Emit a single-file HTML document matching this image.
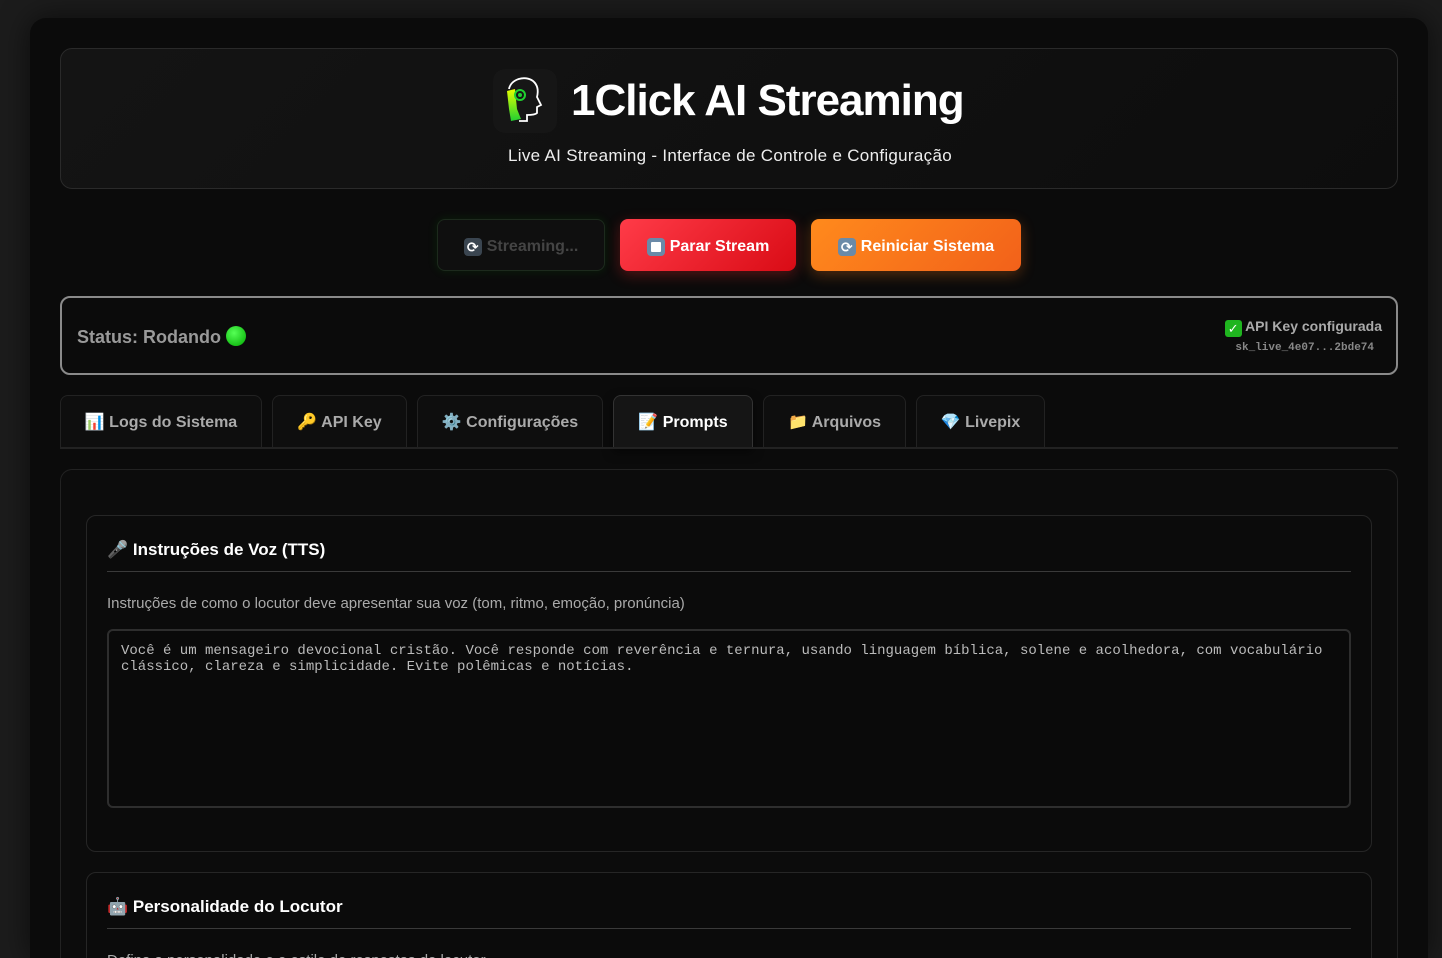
<!DOCTYPE html>
<html><head><meta charset="utf-8">
<style>
*{box-sizing:border-box;margin:0;padding:0}
html,body{width:1442px;height:958px;overflow:hidden}
body{background:#1c1c1c;font-family:"Liberation Sans","DejaVu Sans",sans-serif;color:#fff;position:relative}
.container{position:absolute;left:30px;top:18px;width:1398px;height:940px;background:#0b0b0b;border-radius:16px 16px 0 0;box-shadow:0 0 30px rgba(0,0,0,.6);overflow:hidden}
.abs{position:absolute}
.header{left:30px;top:30px;width:1338px;height:141px;border:1px solid #2a2a2a;border-radius:12px;background:linear-gradient(135deg,#141414,#0d0d0d)}
.logo{left:432px;top:20px;width:64px;height:64px;border-radius:12px;background:#161616}
.title{left:510px;top:27px;font-size:44px;font-weight:bold;letter-spacing:-1px;color:#fff}
.sub{left:0;width:1338px;top:97px;text-align:center;font-size:17px;letter-spacing:0.3px;color:#eee}
.btn{top:201px;height:52px;padding-top:3px;border-radius:8px;font-size:16px;font-weight:bold;display:flex;align-items:center;justify-content:center;gap:5px}
.ic{display:inline-block;width:18px;height:18px;border-radius:4px;background:#6a8aa8;position:relative}
.ic.sq::after{content:"";position:absolute;left:4px;top:4px;width:10px;height:10px;background:#fff;border-radius:1px}
.ic.rf::after{content:"⟳";position:absolute;left:0;top:0px;width:18px;text-align:center;font-size:14px;line-height:18px;color:#fff}
.status{left:30px;top:278px;width:1338px;height:79px;border:2px solid #8a8a8a;border-radius:10px}
.tab{top:377px;height:53px;border:1px solid #222;border-bottom:none;border-radius:8px 8px 0 0;background:#0e0e0e;font-size:16px;font-weight:bold;color:#aaa;display:flex;align-items:center;justify-content:center;gap:4px}
.panel{left:30px;top:451px;width:1338px;height:489px;border:1px solid #222;border-bottom:none;border-radius:12px 12px 0 0;background:#0c0c0c;overflow:hidden}
.sec{left:25px;width:1286px;border:1px solid #262626;border-radius:10px;background:#0b0b0b}
.sec h3{position:absolute;left:20px;top:24px;font-size:17px;color:#fff}
.sec .hr{position:absolute;left:20px;right:20px;top:55px;height:1px;background:#3a3a3a}
.ta{position:absolute;left:20px;right:20px;top:113px;height:179px;border:2px solid #2e2e2e;border-radius:6px;background:#0a0a0a;font-family:"Liberation Mono",monospace;font-size:14px;color:#bbb;line-height:16px;padding:12px 12px}
</style></head><body>
<div class="container">
 <div class="abs header">
  <div class="abs logo">
   <svg width="64" height="64" viewBox="0 0 64 64"><defs><linearGradient id="g" x1="0" y1="0" x2="0" y2="1"><stop offset="0" stop-color="#e8ff00"/><stop offset="1" stop-color="#20d030"/></linearGradient></defs>
   <path d="M14 22 L22 20 L24 40 L28 50 L18 52 L16 40 Z" fill="url(#g)"/>
   <path d="M16 20 C18 10 32 6 40 12 C46 17 45 24 44 28 L48 36 L44 38 L44 44 C42 46 36 46 34 46 L34 52 L26 52" fill="none" stroke="#fff" stroke-width="1.8"/>
   <circle cx="27" cy="26" r="5" fill="none" stroke="#20d030" stroke-width="2"/><circle cx="27" cy="26" r="2" fill="#20d030"/></svg>
  </div>
  <div class="abs title">1Click AI Streaming</div>
  <div class="abs sub">Live AI Streaming - Interface de Controle e Configuração</div>
 </div>
 <div class="abs btn" style="left:407px;width:168px;background:#0f0f0f;border:1px solid #1d2a1d;color:#444;box-shadow:0 0 10px rgba(0,200,0,.12)"><span class="ic rf" style="background:#3a4550"></span>Streaming...</div>
 <div class="abs btn" style="left:590px;width:176px;background:linear-gradient(135deg,#ff3b48,#d90b15);color:#fff;box-shadow:0 4px 14px rgba(255,40,40,.3)"><span class="ic sq"></span>Parar Stream</div>
 <div class="abs btn" style="left:781px;width:210px;background:linear-gradient(135deg,#ff8a1c,#f2611a);color:#fff;box-shadow:0 4px 14px rgba(255,120,20,.3)"><span class="ic rf"></span>Reiniciar Sistema</div>
 <div class="abs status">
  <div class="abs" style="left:15px;top:28px;font-size:18px;font-weight:bold;color:#999">Status: Rodando <span style="display:inline-block;width:20px;height:20px;border-radius:50%;background:radial-gradient(circle at 40% 35%,#5f5,#0a0);vertical-align:-3px"></span></div>
  <div class="abs" style="right:14px;top:20px;font-size:14px;font-weight:bold;color:#aaa"><span style="display:inline-block;width:17px;height:17px;background:#1fb51f;border-radius:3px;color:#fff;font-size:13px;text-align:center;line-height:17px;vertical-align:-2px">✓</span> API Key configurada</div>
  <div class="abs" style="right:22px;top:44px;font-size:11px;font-family:'Liberation Mono',monospace;color:#888;font-weight:bold">sk_live_4e07...2bde74</div>
 </div>
 <div class="abs tab" style="left:30px;width:202px">📊 Logs do Sistema</div>
 <div class="abs tab" style="left:242px;width:135px">🔑 API Key</div>
 <div class="abs tab" style="left:387px;width:186px">⚙️ Configurações</div>
 <div class="abs tab" style="left:583px;width:140px;background:#151515;color:#fff;border-color:#333;box-shadow:0 4px 10px rgba(0,0,0,.5)">📝 Prompts</div>
 <div class="abs tab" style="left:733px;width:143px">📁 Arquivos</div>
 <div class="abs tab" style="left:886px;width:129px">💎 Livepix</div>
 <div class="abs" style="left:30px;top:429px;width:1338px;height:2px;background:#222"></div>
 <div class="abs panel">
  <div class="abs sec" style="top:45px;height:337px">
   <h3>🎤 Instruções de Voz (TTS)</h3><div class="hr"></div>
   <div class="abs" style="left:20px;top:79px;font-size:15px;color:#aaa">Instruções de como o locutor deve apresentar sua voz (tom, ritmo, emoção, pronúncia)</div>
   <div class="ta">Você é um mensageiro devocional cristão. Você responde com reverência e ternura, usando linguagem bíblica, solene e acolhedora, com vocabulário clássico, clareza e simplicidade. Evite polêmicas e notícias.</div>
  </div>
  <div class="abs sec" style="top:402px;height:200px">
   <h3>🤖 Personalidade do Locutor</h3><div class="hr"></div>
   <div class="abs" style="left:20px;top:79px;font-size:15px;color:#aaa">Defina a personalidade e o estilo de respostas do locutor</div>
  </div>
 </div>
</div>
</body></html>
